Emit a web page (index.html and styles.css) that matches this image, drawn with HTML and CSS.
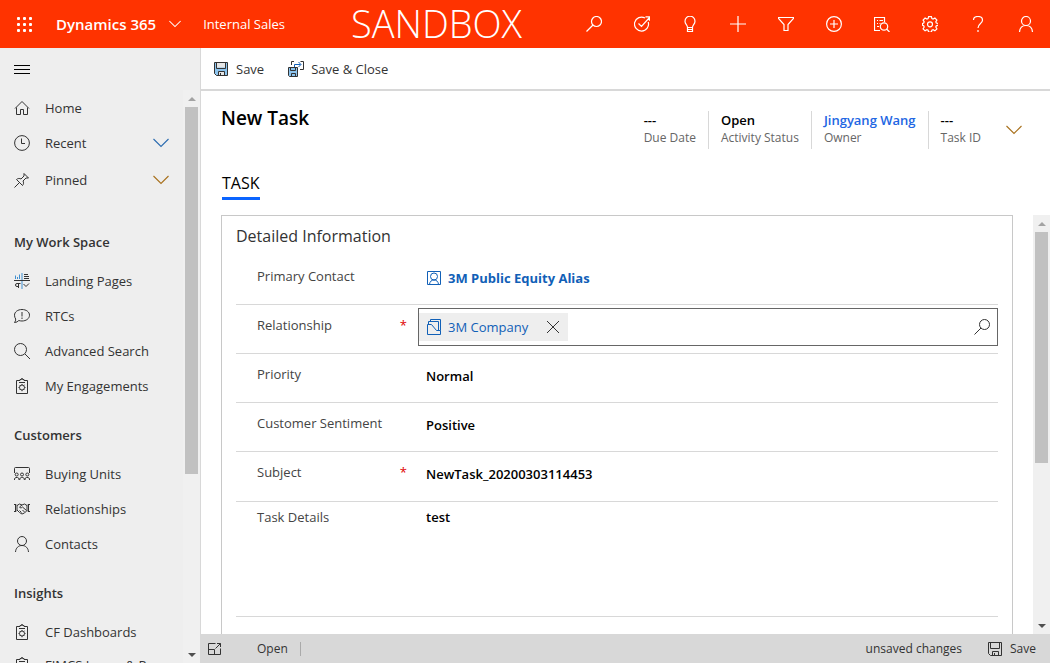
FILE: index.html
```html
<!DOCTYPE html>
<html lang="en">
<head>
<meta charset="utf-8">
<title>New Task - Dynamics 365</title>
<link rel="stylesheet" href="styles.css">
</head>
<body>
<svg class="sprite" aria-hidden="true">
  <symbol id="chevron" viewBox="0 0 16 10"><path d="M.5 1 8 8.500 15.500 1"/></symbol>
  <symbol id="lens" viewBox="0 0 16 16"><circle cx="10.500" cy="5.500" r="5"/><path d="M7 9 .5 15.500"/></symbol>
  <symbol id="target" viewBox="0 0 16 16"><path d="M11 2A7 7 0 1 0 14.200 6M4.500 7.500l3 3 8-9M11.500.8h4v4"/></symbol>
  <symbol id="bulb" viewBox="0 0 16 16"><path d="M5.500 11.500C5.500 9 3 8.300 3 5.200a5 5 0 0 1 10 0c0 3.100-2.500 3.800-2.500 6.300zM5.500 11.500v4h5v-4M5.500 13.500h5"/></symbol>
  <symbol id="plus" viewBox="0 0 16 16"><path d="M8 0v16M0 8h16"/></symbol>
  <symbol id="funnel" viewBox="0 0 16 16"><path d="M.5 1.500h15v1L10 8.500v6H6v-6L.5 2.500z"/></symbol>
  <symbol id="plus-circle" viewBox="0 0 16 16"><circle cx="8" cy="8" r="7.400"/><path d="M8 4v8M4 8h8"/></symbol>
  <symbol id="doc-search" viewBox="0 0 16 16"><path d="M6 14.500H.5v-13h10V6M3 4.500h1M5.500 4.500H9M3 7.500h1M5.500 7.500h1M3 10.500h2"/><circle cx="10" cy="10.500" r="3.700"/><path d="m12.500 13 3 3"/></symbol>
  <symbol id="gear" viewBox="0 0 16 16"><path d="M6.600.6h2.800l.5 2 1.200.5 1.800-1 2 2-1.100 1.700.5 1.200 2 .5v1.800l-2 .5-.5 1.200 1.100 1.800-2 2-1.800-1.100-1.200.5-.5 2H6.600l-.5-2-1.200-.5-1.800 1.100-2-2L2.200 11l-.5-1.200-1.200-.5V7.500L1.700 7l.5-1.200L1.100 4.100l2-2 1.800 1 1.200-.5z"/><circle cx="8" cy="8.300" r="2.500"/></symbol>
  <symbol id="help" viewBox="0 0 16 16"><path d="M3.500 4C3.500 1.800 5.500.5 8 .5s4.500 1.300 4.500 3.700C12.500 7.500 8 7.500 8 12M8 14v2"/></symbol>
  <symbol id="person" viewBox="0 0 16 16"><circle cx="8" cy="5" r="4.500"/><path d="M1.500 16c.3-4 2.800-6.500 6.500-6.500s6.200 2.500 6.500 6.500"/></symbol>
  <symbol id="floppy" viewBox="0 0 16 16"><path class="fill" d="M1.500 1.500h13v13h-11l-2-2z"/><path class="paper" d="M4 1.500h8v5H4zM5 10.500h6v4H5z"/><path d="M1.500 1.500h13v13h-11l-2-2zM3.500 1.500v6h9v-6M5.500 14.500v-4h6v4M7.500 12v2"/></symbol>
  <symbol id="floppy-out" viewBox="0 0 16 16"><path class="fill" d="M.5 6.500h9v9h-8l-1-1z"/><path d="M.5 6.500h9v9h-8l-1-1zM2.500 6.500v3h5v-3M3.500 15.500v-3h4v3M3.500 4V.5H6M12.500.5h3v8H12"/><path class="accent" d="M6.500 6V3.500h6M10.500 1l2.500 2.500L10.500 6"/></symbol>
  <symbol id="home" viewBox="0 0 16 16"><path d="M1 8.500 8 1.500l7 7M2.500 7.500v7h4v-5h3v5h4v-7"/></symbol>
  <symbol id="clock" viewBox="0 0 16 16"><circle cx="8" cy="8" r="7.400"/><path d="M7.500 3.500v5H11"/></symbol>
  <symbol id="pin" viewBox="0 0 16 16"><path d="m.5 15.500 5-5M2.500 7.500c1.500-1.300 3-1.300 4.500-.5l3-3V1.500l4.500 4.500H12l-3 3c.8 1.500.8 3-.5 4.500z"/></symbol>
  <symbol id="charts" viewBox="0 0 16 16"><path class="blue" d="M1.500 6V2.500M3.500 6V4M5.500 6V1.500M8 0v16"/><path d="M0 7.500h16M10 1.500h4M10 3.500h5M10 5.500h5M6.500 10.500H3a1.500 1.500 0 0 0 0 3h1.500M4.500 11v4M9.500 11l2.500 2.500 3-3"/></symbol>
  <symbol id="speech" viewBox="0 0 16 16"><path d="M8 1.500c4.200 0 7.500 2.400 7.500 5.700S12.200 13 8 13c-1.300 0-2.300-.2-3.200-.5C3.700 13.500 2.500 14.500.5 14.500c.9-1 1.300-2.200 1.200-3.500C1 10 .5 8.700.5 7.200.5 3.900 3.800 1.500 8 1.500zM8 4v4.500M8 9.500V11"/></symbol>
  <symbol id="search-left" viewBox="0 0 16 16"><circle cx="6.500" cy="6.500" r="6"/><path d="m11 11 5 5"/></symbol>
  <symbol id="clipboard" viewBox="0 0 16 16"><path d="M2.500 2.500H6v-1h1.500v-1h1v1H10v1h3.500v13h-11zM5 4.500h6"/><circle cx="8" cy="9.500" r="2.500"/><path d="M8 6v1M8 12v1.200M4.500 9.500h1M10.500 9.500h1M5.500 7l.7.700M10.500 7l-.7.700M5.500 12l.7-.7M10.500 12l-.7-.7"/></symbol>
  <symbol id="meeting" viewBox="0 0 16 16"><path d="M.5 7V2.500a1 1 0 0 1 1-1h13a1 1 0 0 1 1 1V7"/><circle cx="2.700" cy="8.500" r="1.500"/><circle cx="8" cy="8.500" r="1.500"/><circle cx="13.300" cy="8.500" r="1.500"/><path d="M.5 14v-1.500l1.500-1h1.500l1.500 1V14M5.800 14v-1.500l1.500-1h1.500l1.500 1V14M11 14v-1.500l1.500-1H14l1.500 1V14"/></symbol>
  <symbol id="handshake" viewBox="0 0 16 16"><path d="M0 3.500h2l1 1v5l-1 1H0M1.500 3.500v7M16 3.500h-2l-1 1v5l1 1h2M14.500 3.500v7M3 4.500 5.500 3 8 4l2.500-1L13 4.500M8 4 5.500 6c.7 1.300 2 1 3 0l4 3.500M3 9l2.500 2.500L8 13l2.500-1 2.500-2.500M5.500 9.500l2 2M8.500 9l2 2"/></symbol>
  <symbol id="contact" viewBox="0 0 16 16"><path d="M1.500 1.500h13v13h-13z"/><circle cx="8" cy="6.500" r="3.500"/><path d="M3.500 14.500c.2-3 2-4.500 4.500-4.500s4.300 1.500 4.500 4.500"/></symbol>
  <symbol id="folders" viewBox="0 0 16 16"><path d="M1.500 5.500h4l5 6h4v4h-13zM2.500 5V2.500h10v9M4.500 2.500v-2h10v11"/></symbol>
  <symbol id="cross" viewBox="0 0 16 16"><path d="m2 2 12 12M14 2 2 14"/></symbol>
  <symbol id="popout" viewBox="0 0 16 16"><path d="M8.500 2.500h-7v11h12v-6M1.500 8.500h6v5M8.500 7.500l5-5M10 2.500h3.500V6"/></symbol>
</svg>

<header class="topbar">
  <button class="launcher" aria-label="App launcher"><i></i><i></i><i></i><i></i><i></i><i></i><i></i><i></i><i></i></button>
  <button class="brand">Dynamics 365 <svg class="icon chev-small"><use href="#chevron"/></svg></button>
  <a class="app-name" href="#">Internal Sales</a>
  <span class="environment">SANDBOX</span>
  <nav class="tools" aria-label="Tools">
    <button aria-label="Search"><svg class="icon"><use href="#lens"/></svg></button>
    <button aria-label="Assistant"><svg class="icon"><use href="#target"/></svg></button>
    <button aria-label="Insights"><svg class="icon"><use href="#bulb"/></svg></button>
    <button aria-label="New"><svg class="icon"><use href="#plus"/></svg></button>
    <button aria-label="Filter"><svg class="icon"><use href="#funnel"/></svg></button>
    <button aria-label="Quick create"><svg class="icon"><use href="#plus-circle"/></svg></button>
    <button aria-label="Search records"><svg class="icon"><use href="#doc-search"/></svg></button>
    <button aria-label="Settings"><svg class="icon"><use href="#gear"/></svg></button>
    <button aria-label="Help"><svg class="icon"><use href="#help"/></svg></button>
    <button aria-label="Account"><svg class="icon"><use href="#person"/></svg></button>
  </nav>
</header>

<div class="shell">
  <aside class="sidebar">
    <button class="menu-toggle" aria-label="Toggle navigation"><i></i><i></i><i></i></button>
    <div class="scroll-area">
      <nav class="site-map" aria-label="Site map">
        <a class="nav-item" href="#"><svg class="icon"><use href="#home"/></svg>Home</a>
        <button class="nav-item"><svg class="icon"><use href="#clock"/></svg>Recent<svg class="icon chev recent"><use href="#chevron"/></svg></button>
        <button class="nav-item pinned"><svg class="icon"><use href="#pin"/></svg>Pinned<svg class="icon chev amber"><use href="#chevron"/></svg></button>
        <h2 class="nav-heading first">My Work Space</h2>
        <a class="nav-item" href="#"><svg class="icon"><use href="#charts"/></svg>Landing Pages</a>
        <a class="nav-item" href="#"><svg class="icon"><use href="#speech"/></svg>RTCs</a>
        <a class="nav-item" href="#"><svg class="icon"><use href="#search-left"/></svg>Advanced Search</a>
        <a class="nav-item" href="#"><svg class="icon"><use href="#clipboard"/></svg>My Engagements</a>
        <h2 class="nav-heading">Customers</h2>
        <a class="nav-item" href="#"><svg class="icon"><use href="#meeting"/></svg>Buying Units</a>
        <a class="nav-item" href="#"><svg class="icon"><use href="#handshake"/></svg>Relationships</a>
        <a class="nav-item" href="#"><svg class="icon"><use href="#person"/></svg>Contacts</a>
        <h2 class="nav-heading">Insights</h2>
        <a class="nav-item" href="#"><svg class="icon"><use href="#clipboard"/></svg>CF Dashboards</a>
        <a class="nav-item last" href="#"><svg class="icon"><use href="#clipboard"/></svg>FIMCS Issuer &amp; P</a>
      </nav>
      <div class="scrollbar side" aria-hidden="true"><span class="up"></span><div class="track"><span class="thumb"></span></div><span class="down"></span></div>
    </div>
  </aside>

  <main class="page">
    <div class="commands">
      <button><svg class="icon"><use href="#floppy"/></svg>Save</button>
      <button><svg class="icon"><use href="#floppy-out"/></svg>Save &amp; Close</button>
    </div>
    <div class="record-head">
      <h1>New Task</h1>
      <dl class="summary">
        <div><dd>---</dd><dt>Due Date</dt></div>
        <div><dd>Open</dd><dt>Activity Status</dt></div>
        <div><dd><a href="#">Jingyang Wang</a></dd><dt>Owner</dt></div>
        <div><dd>---</dd><dt>Task ID</dt></div>
      </dl>
      <button class="expand" aria-label="More header fields"><svg class="icon chev amber"><use href="#chevron"/></svg></button>
    </div>
    <div class="tabs" role="tablist"><button role="tab" aria-selected="true">TASK</button></div>
    <div class="form-scroll">
      <form class="panel">
        <h2>Detailed Information</h2>
        <div class="row">
          <span class="label">Primary Contact</span>
          <div class="value"><a class="record-link" href="#"><svg class="icon"><use href="#contact"/></svg>3M Public Equity Alias</a></div>
        </div>
        <div class="row">
          <label class="label" for="relationship">Relationship<span class="required">*</span></label>
          <div class="lookup">
            <span class="chip"><a href="#"><svg class="icon"><use href="#folders"/></svg>3M Company</a><button type="button" aria-label="Remove 3M Company"><svg class="icon"><use href="#cross"/></svg></button></span>
            <input id="relationship" type="text">
            <button type="button" class="find" aria-label="Search relationships"><svg class="icon"><use href="#lens"/></svg></button>
          </div>
        </div>
        <div class="row">
          <label class="label" for="priority">Priority</label>
          <div class="value"><select id="priority"><option>Normal</option></select></div>
        </div>
        <div class="row">
          <label class="label" for="sentiment">Customer Sentiment</label>
          <div class="value"><select id="sentiment"><option>Positive</option></select></div>
        </div>
        <div class="row subject">
          <label class="label" for="subject">Subject<span class="required">*</span></label>
          <div class="value"><input id="subject" type="text" value="NewTask_20200303114453"></div>
        </div>
        <div class="row details">
          <label class="label" for="details">Task Details</label>
          <div class="value"><textarea id="details" rows="4">test</textarea></div>
        </div>
        <div class="row"></div>
      </form>
      <div class="scrollbar form" aria-hidden="true"><span class="up"></span><div class="track"><span class="thumb"></span></div><span class="down"></span></div>
    </div>
    <footer class="status">
      <button aria-label="Open in new window"><svg class="icon"><use href="#popout"/></svg></button>
      <span class="state">Open</span>
      <span class="unsaved">unsaved changes</span>
      <button class="save"><svg class="icon"><use href="#floppy"/></svg>Save</button>
    </footer>
  </main>
</div>
</body>
</html>
```
FILE: styles.css
```css
* { box-sizing: border-box; }
body {
  margin: 0;
  height: 100vh;
  display: flex;
  flex-direction: column;
  overflow: hidden;
  font: 13px/20px "Open Sans", "Noto Sans", sans-serif;
  color: #333;
  background: #fff;
}
h1, h2, dl, dd { margin: 0; }
a { color: inherit; text-decoration: none; }
button, input, select, textarea {
  font: inherit;
  color: inherit;
  background: none;
  border: 0;
  margin: 0;
  padding: 0;
  border-radius: 0;
  outline: none;
}
.sprite { position: absolute; width: 0; height: 0; }
.icon { width: 16px; height: 16px; flex: none; fill: none; stroke: currentColor; stroke-width: 1; }
.icon.chev { height: 10px; stroke-width: 1.100; }
.fill { fill: var(--disk, none); stroke: none; }
.paper { fill: var(--paper, none); stroke: none; }
.accent { stroke: #1160b7; }
.amber { color: #a8701c; }
.blue { stroke: #3f8fd0; }

/* Top bar */
.topbar {
  flex: none;
  height: 48px;
  display: flex;
  align-items: center;
  background: #ff3300;
  color: #fff;
}
.launcher {
  width: 48px;
  height: 48px;
  display: grid;
  grid-template-columns: repeat(3, 3px);
  gap: 3px;
  place-content: center;
}
.launcher i { width: 3px; height: 3px; border-radius: 1px; background: #fff; }
.brand { display: flex; align-items: center; gap: 13px; margin-left: 8px; font-size: 15px; font-weight: 600; }
.chev-small { width: 12px; height: 8px; stroke-width: 1.400; }
.app-name { margin-left: 22px; }
.environment { margin-left: 66px; padding-bottom: 2px; font-size: 38px; line-height: 52px; font-weight: 300; }
.tools { display: flex; margin-left: auto; }
.tools button { width: 48px; height: 46px; display: grid; place-items: center; }
.tools .icon { stroke-width: 1.200; }

.shell { flex: 1; min-height: 0; display: flex; }

/* Sidebar */
.sidebar {
  flex: none;
  width: 201px;
  display: flex;
  flex-direction: column;
  background: #eee;
  border-right: 1px solid #d8d8d8;
}
.menu-toggle {
  flex: none;
  height: 42px;
  padding-left: 14px;
  display: flex;
  flex-direction: column;
  justify-content: center;
  gap: 3px;
}
.menu-toggle i { width: 16px; height: 1px; background: #000; }
.scroll-area { flex: 1; min-height: 0; display: flex; }
.site-map { flex: 1; min-width: 0; overflow: hidden; }
.nav-item {
  width: 100%;
  height: 35px;
  padding: 0 14px;
  display: flex;
  align-items: center;
  gap: 15px;
  color: #333;
  white-space: nowrap;
}
.nav-item.pinned { height: 39px; }
.nav-item.last { height: 32px; }
.nav-item .chev { margin-left: auto; }
.nav-item .recent { color: #2b6cb0; }
.nav-heading { padding: 22px 14px 11px; font-size: 13px; line-height: 20px; font-weight: 600; }
.nav-heading.first { margin-top: 11px; }

/* Scrollbars */
.scrollbar { flex: none; width: 17px; display: flex; flex-direction: column; background: #f0f0f0; }
.scrollbar .track { flex: 1; padding: 0 2px; }
.thumb { display: block; background: #c1c1c1; }
.side .thumb { height: 68%; }
.form .thumb { height: 60%; }
.up, .down { height: 17px; display: grid; place-items: center; }
.up::before, .down::before { content: ""; border: 4px solid transparent; }
.up::before { border-top: 0; border-bottom-color: #a3a3a3; }
.down::before { border-bottom: 0; border-top-color: #505050; }

/* Command bar */
.page { flex: 1; min-width: 0; display: flex; flex-direction: column; }
.commands {
  --disk: #8cc4ee;
  --paper: #e6e6e6;
  flex: none;
  height: 43px;
  padding-left: 12px;
  display: flex;
  align-items: center;
  gap: 24px;
  border-bottom: 2px solid #d8d8d8;
}
.commands button { display: flex; align-items: center; gap: 7px; }

/* Record header */
.record-head { flex: none; height: 74px; padding: 15px 28px 0 20px; display: flex; align-items: flex-start; color: #000; }
.record-head h1 { font-size: 19px; line-height: 24px; font-weight: 600; }
.summary { display: flex; margin-left: auto; padding-top: 5px; }
.summary div { display: flex; flex-direction: column; height: 38px; padding: 0 12px; }
.summary div + div { border-left: 1px solid #d8d8d8; }
.summary dd { font-size: 13px; line-height: 18px; font-weight: 600; }
.summary dt { font-size: 12px; line-height: 18px; color: #666; }
.summary a { color: #2266e3; }
.expand { height: 38px; margin: 5px 0 0 13px; display: grid; place-items: center; }

/* Tabs */
.tabs { flex: none; height: 50px; padding-left: 21px; }
.tabs button { height: 35px; padding-top: 3px; border-bottom: 3px solid #0a64ff; color: #000; font-size: 16px; line-height: 28px; }

/* Form */
.form-scroll { flex: 1; min-height: 0; display: flex; justify-content: space-between; gap: 20px; padding-left: 20px; overflow: hidden; }
.panel { flex: 1; min-width: 0; align-self: flex-start; padding: 0 14px; border: 1px solid #c8c8c8; }
.panel h2 { font-size: 16px; line-height: 40px; font-weight: 400; }
.row { display: flex; align-items: flex-start; height: 49px; border-bottom: 1px solid #d8d8d8; }
.label { flex: none; width: 182px; padding: 10px 11px 0 21px; display: flex; justify-content: space-between; color: #444; }
.required { color: #e00000; }
.value { flex: 1; min-width: 0; padding: 12px 8px 0; color: #000; font-weight: 600; }
.value input, .value select, .value textarea { display: block; width: 100%; height: 20px; appearance: none; }
.value textarea { height: 90px; resize: none; }
.subject { height: 50px; }
.details { height: 115px; }
.details .label, .details .value { padding-top: 5px; }
.record-link { display: flex; align-items: center; gap: 6px; color: #1160b7; font-weight: 700; }
.lookup {
  flex: 1;
  min-width: 0;
  height: 38px;
  margin-top: 3px;
  padding: 4px 7px 4px 0;
  display: flex;
  align-items: center;
  border: 1px solid #666;
}
.lookup input { flex: 1; min-width: 0; }
.chip { height: 28px; padding: 0 7px; display: flex; align-items: center; gap: 17px; background: #eee; }
.chip a { display: flex; align-items: center; gap: 6px; color: #1160b7; }
.chip button, .find { display: grid; place-items: center; }

/* Status bar */
.status { flex: none; height: 29px; padding: 0 14px 0 6px; display: flex; align-items: center; background: #d8d8d8; font-size: 12px; }
.status button { display: flex; align-items: center; gap: 7px; }
.state { margin-left: 34px; padding-right: 12px; line-height: 14px; border-right: 1px solid #aaa; }
.unsaved { margin-left: auto; }
.status .save { margin-left: 25px; }
```
